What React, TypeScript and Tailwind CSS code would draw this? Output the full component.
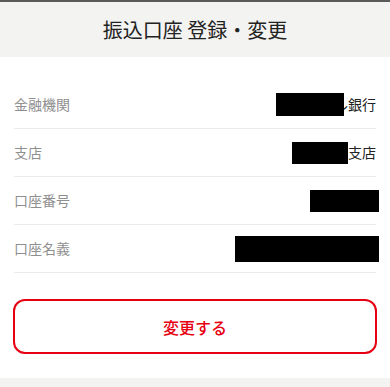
import React from "react";

const rows = [
  { label: "金融機関", kind: "bank" },
  { label: "支店", kind: "branch" },
  { label: "口座番号", kind: "number" },
  { label: "口座名義", kind: "name" },
];

function Value({ kind }: { kind: string }) {
  if (kind === "bank") {
    return (
      <div className="flex items-center">
        <span className="relative z-10 block w-[68px] h-[23px] bg-black" />
        <span className="-ml-[10px] text-[14px] text-[#222]">ル銀行</span>
      </div>
    );
  }
  if (kind === "branch") {
    return (
      <div className="flex items-center">
        <span className="block w-[56px] h-[22px] bg-black" />
        <span className="text-[14px] text-[#222]">支店</span>
      </div>
    );
  }
  if (kind === "number") {
    return <span className="block w-[69px] h-[22px] bg-black -mr-[3px]" />;
  }
  return <span className="block w-[144px] h-[26px] bg-black -mr-[3px]" />;
}

export default function App() {
  return (
    <div
      className="w-[390px] h-[387px] overflow-hidden flex flex-col bg-white"
      style={{ fontFamily: '"Noto Sans CJK JP", "Noto Sans", sans-serif' }}
    >
      {/* header */}
      <div className="h-[57px] shrink-0 border-t-2 border-[#5a5a5a] bg-[#f3f3f1] flex items-center justify-center">
        <h1 className="text-[20px] font-normal text-[#222]">振込口座 登録・変更</h1>
      </div>

      {/* rows */}
      <div className="px-[14px] pt-[24px]">
        {rows.map((r) => (
          <div
            key={r.label}
            className="h-[48px] border-b border-[#ebebeb] flex items-center justify-between"
          >
            <span className="text-[14px] text-[#8f8f8f]">{r.label}</span>
            <Value kind={r.kind} />
          </div>
        ))}
      </div>

      {/* button */}
      <div className="px-[13px] pt-[26px]">
        <button className="w-full h-[55px] rounded-[12px] border-2 border-[#e60012] bg-white text-[16px] font-medium text-[#e60012]">
          変更する
        </button>
      </div>

      <div className="mt-[24px] flex-1 bg-[#f3f3f1]" />
    </div>
  );
}
